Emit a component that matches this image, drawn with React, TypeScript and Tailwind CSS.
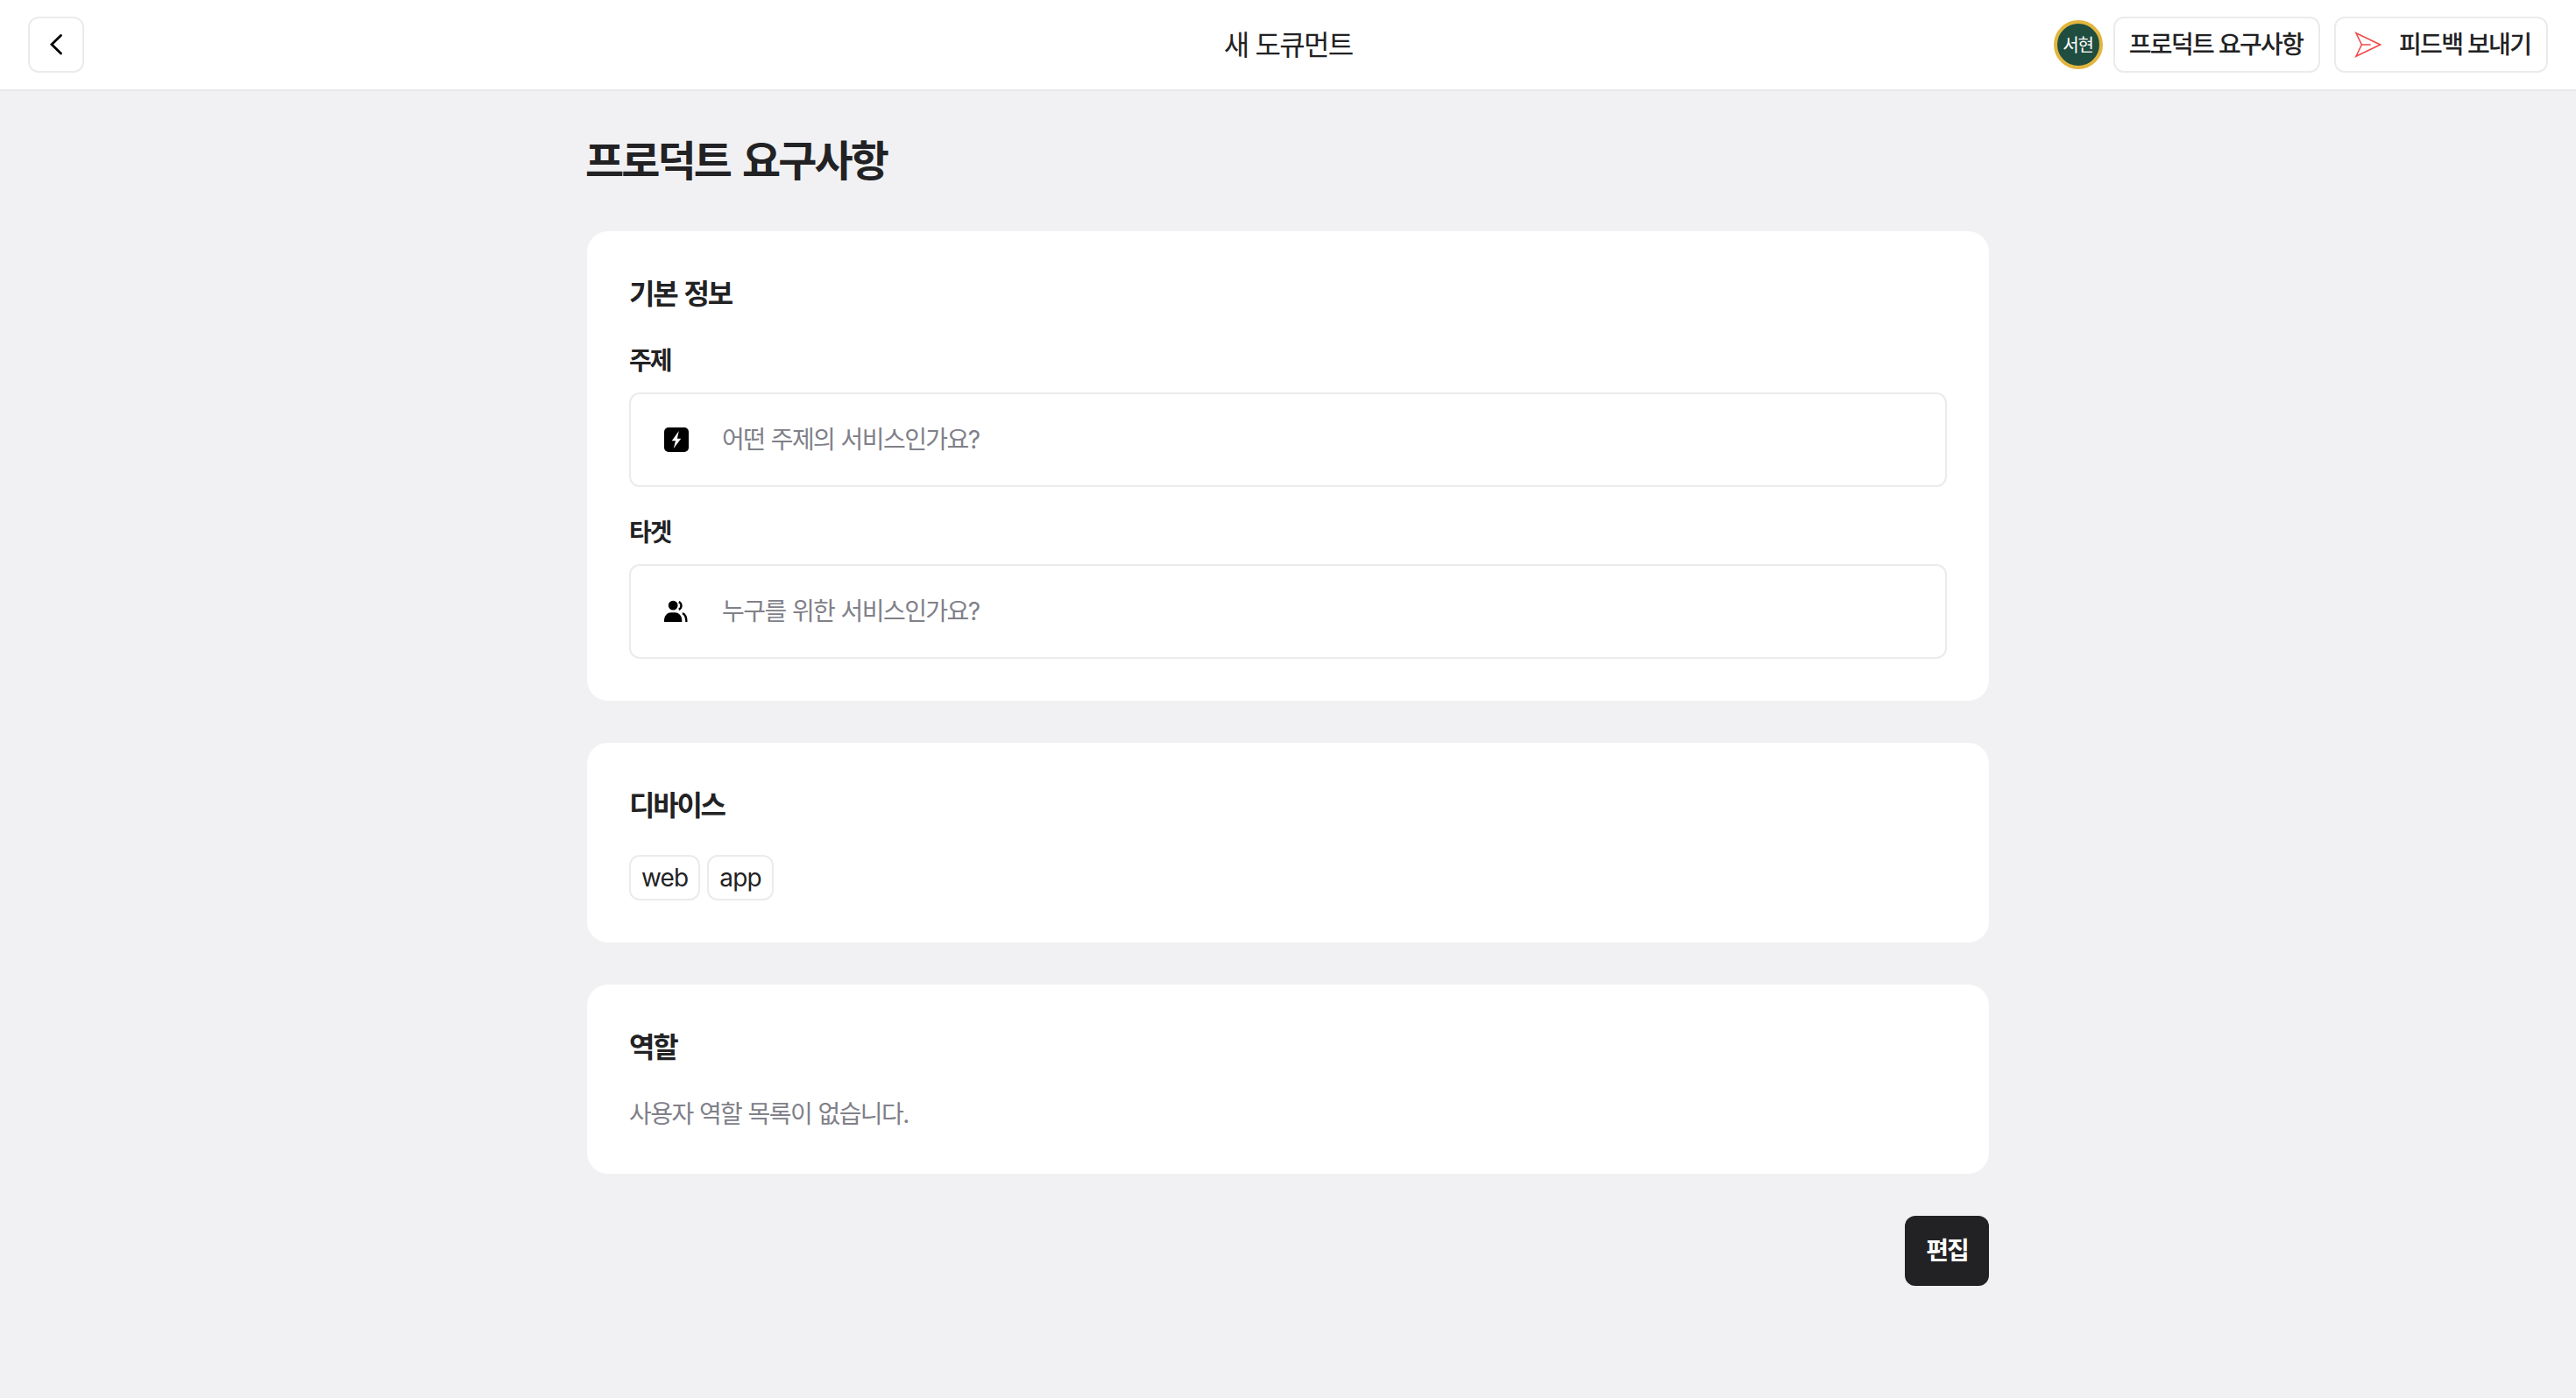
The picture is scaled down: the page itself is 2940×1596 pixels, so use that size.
import { ReactNode } from "react";

const devices = ["web", "app"];

const ChevronIcon = () => (
  <svg className="size-10" viewBox="0 0 40 40" fill="none" stroke="black" strokeWidth="2.8">
    <path d="M25.5 9.5 15 19.8l10.500 10.300" strokeLinecap="round" />
  </svg>
);

const SendIcon = () => (
  <svg className="size-8" viewBox="0 0 32 32" fill="none" stroke="#f04b4b" strokeWidth="1.6">
    <path d="M3 2.8 30.5 16 3 29.200 9.400 16Z M9.400 16h10.300" />
  </svg>
);

const TopicIcon = () => (
  <svg className="size-7" viewBox="0 0 28 28">
    <rect width="28" height="28" rx="5" fill="black" />
    <path d="M16.8 4 8.700 15.200H13L10.800 24 19.200 12.800h-4.300z" fill="white" />
  </svg>
);

const TargetIcon = () => (
  <svg className="size-7" viewBox="0 0 28 28" fill="black">
    <circle cx="10.2" cy="7.1" r="5.4" />
    <path d="M0 26v-2.700a8 8 0 0 1 8-8h4.300a8 8 0 0 1 8 8V26z" />
    <path
      d="M16.800 3.100c3.600 1.700 3.600 7 0 8.700M21 16.200c3 1.200 4.400 4.200 4.400 9.800"
      fill="none"
      stroke="black"
      strokeWidth="2.4"
    />
  </svg>
);

const Card = ({ title, children }: { title: string; children: ReactNode }) => (
  <section className="flex flex-col gap-8 rounded-3xl bg-white p-12">
    <h2 className="text-[32px] leading-12 font-semibold tracking-[-0.07em] [word-spacing:0.075em]">{title}</h2>
    {children}
  </section>
);

const Field = ({ label, placeholder, icon }: { label: string; placeholder: string; icon: ReactNode }) => (
  <div className="flex flex-col gap-4">
    <p className="leading-10 font-semibold tracking-[-0.075em]">{label}</p>
    <div className="flex h-27 items-center gap-[38px] rounded-xl border-2 border-[#ebebeb] pl-[38px] text-[#808089]">
      {icon}
      <span>{placeholder}</span>
    </div>
  </div>
);

const Header = () => (
  <header className="grid h-26 grid-cols-3 items-center border-b-2 border-[#e8e8ea] bg-white px-8">
    <button className="flex size-16 items-center justify-center rounded-xl border-2 border-[#ebebeb]">
      <ChevronIcon />
    </button>
    <p className="pt-px text-center text-[32px] tracking-[-0.055em]">{"새 도큐먼트"}</p>
    <div className="flex items-center justify-end">
      <div className="mr-3 flex size-14 items-center justify-center rounded-full border-4 border-[#e2b53e] bg-[#1f4d40] pt-0.5 pr-px text-xl tracking-[-0.056em] text-white">
        {"서현"}
      </div>
      <button className="mr-4 h-16 w-59 rounded-xl border-2 border-[#ebebeb] pr-0.5 font-medium tracking-[-0.06em]">
        {"프로덕트 요구사항"}
      </button>
      <button className="flex h-16 w-61 items-center gap-5 rounded-xl border-2 border-[#ebebeb] pl-5 font-medium tracking-[-0.06em]">
        <SendIcon />
        {"피드백 보내기"}
      </button>
    </div>
  </header>
);

export default function App() {
  return (
    <div className="min-h-screen bg-[#f1f1f3] font-[Inter,'Noto_Sans_CJK_KR',sans-serif] text-[28px] tracking-[-0.056em] text-[#222224] [word-spacing:1px]">
      <Header />
      <main className="mx-auto flex w-[1600px] flex-col gap-12 pt-12">
        <h1 className="-ml-0.5 text-5xl leading-16 font-semibold tracking-[-0.061em] [word-spacing:5px]">{"프로덕트 요구사항"}</h1>
        <Card title="기본 정보">
          <Field label="주제" placeholder="어떤 주제의 서비스인가요?" icon={<TopicIcon />} />
          <Field label="타겟" placeholder="누구를 위한 서비스인가요?" icon={<TargetIcon />} />
        </Card>
        <Card title="디바이스">
          <div className="flex gap-2">
            {devices.map((device) => (
              <span key={device} className="flex h-13 items-center rounded-xl border-2 border-[#ebebeb] px-3 tracking-[-0.03em]">
                {device}
              </span>
            ))}
          </div>
        </Card>
        <Card title="역할">
          <p className="leading-10 text-[#808089]">{"사용자 역할 목록이 없습니다."}</p>
        </Card>
        <button className="h-20 w-24 self-end rounded-xl bg-[#222224] font-semibold tracking-[-0.07em] text-white">{"편집"}</button>
      </main>
    </div>
  );
}
